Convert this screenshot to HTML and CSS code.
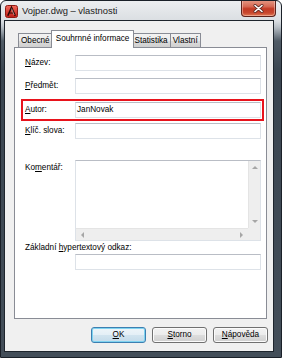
FILE: index.html
```html
<!DOCTYPE html>
<html lang="cs">
<head>
    <meta charset="UTF-8">
    <title>Vojper.dwg – vlastnosti</title>
    <link rel="stylesheet" href="styles.css">
</head>
<body>
    <!-- okno dialogu -->
    <div class="window">
        <div class="titlebar">
            <svg class="app-icon" width="13" height="13" viewBox="0 0 13 13">
                <defs>
                    <linearGradient id="icoRed" x1="0" y1="0" x2="0" y2="1">
                        <stop offset="0" stop-color="#f36a5c"/>
                        <stop offset="1" stop-color="#c01d17"/>
                    </linearGradient>
                </defs>
                <rect x="0.5" y="0.5" width="12" height="12" rx="2" fill="url(#icoRed)" stroke="#8e1b14"/>
                <path d="M2.8 10.8 L6.5 2.4 L10.2 10.8" fill="none" stroke="#2a0604" stroke-width="1.6"/>
                <path d="M4.6 8 L8.4 8" stroke="#2a0604" stroke-width="1.1"/>
                <path d="M6.5 3.6 L9.2 10" fill="none" stroke="#ffd9d2" stroke-width="0.6"/>
            </svg>
            <span class="title">Vojper.dwg – vlastnosti</span>
            <div class="close-btn">
                <svg width="11" height="9" viewBox="0 0 11 9">
                    <path d="M2 1.5 L9 7.5 M9 1.5 L2 7.5" stroke="#5a2a24" stroke-width="3" stroke-linecap="round"/>
                    <path d="M2 1.5 L9 7.5 M9 1.5 L2 7.5" stroke="#ffffff" stroke-width="1.6" stroke-linecap="round"/>
                </svg>
            </div>
        </div>

        <div class="client">
            <!-- záložky -->
            <div class="tabs">
                <div class="tab">Obecné</div>
                <div class="tab active">Souhrnné informace</div>
                <div class="tab">Statistika</div>
                <div class="tab">Vlastní</div>
            </div>

            <div class="panel">
                <div class="row">
                    <span class="label"><u>N</u>ázev:</span>
                    <div class="field"></div>
                </div>
                <div class="row row-2">
                    <span class="label"><u>P</u>ředmět:</span>
                    <div class="field"></div>
                </div>
                <!-- zvýrazněný řádek -->
                <div class="row row-hl">
                    <span class="label"><u>A</u>utor:</span>
                    <div class="field">JanNovak</div>
                </div>
                <div class="row row-4">
                    <span class="label"><u>K</u>líč. slova:</span>
                    <div class="field"></div>
                </div>
                <div class="row row-comment">
                    <span class="label">Ko<u>m</u>entář:</span>
                    <div class="memo">
                        <div class="memo-text"></div>
                        <div class="vscroll"><span class="arr arr-up"></span><span class="arr arr-down"></span></div>
                        <div class="hscroll"><span class="arr arr-left"></span><span class="arr arr-right"></span></div>
                        <div class="corner"></div>
                    </div>
                </div>
                <div class="link-label">Základní <u>h</u>ypertextový odkaz:</div>
                <div class="field link-field"></div>
            </div>

            <div class="buttons">
                <div class="btn btn-default"><u>O</u>K</div>
                <div class="btn"><u>S</u>torno</div>
                <div class="btn"><u>N</u>ápověda</div>
            </div>
        </div>
    </div>
</body>
</html>
```

FILE: styles.css
```css
/* základ */
html, body {
    margin: 0;
    padding: 0;
    background: #ffffff;
}

body {
    font-family: "Liberation Sans", Arial, sans-serif;
    font-size: 8.2px;
    color: #000;
}

u {
    text-decoration: underline;
    text-underline-offset: 1px;
}

/* okno s rámečkem */
.window {
    width: 282px;
    height: 358px;
    box-sizing: border-box;
    border: 1px solid #1a2028;
    border-radius: 6px 6px 0 0;
    background: linear-gradient(180deg, #eceef0 0px, #dadee2 20px, #b9c0c7 26px, #505b66 40px, #3b4651 70px, #434e59 100%);
    display: flex;
    flex-direction: column;
    overflow: hidden;
}

.titlebar {
    height: 20px;
    display: flex;
    align-items: flex-start;
    flex-shrink: 0;
}

.app-icon {
    margin: 4px 0 0 4px;
}

.title {
    margin: 4px 0 0 4px;
    font-size: 9.4px;
    color: #1b1b1b;
    line-height: 12px;
}

.close-btn {
    margin: -1px 5px 0 auto;
    width: 35px;
    height: 17px;
    box-sizing: border-box;
    border: 1px solid #5b231c;
    border-top: none;
    border-radius: 0 0 4px 4px;
    background: linear-gradient(180deg, #e59a86 0%, #d66a55 40%, #c23a24 55%, #c8472e 80%, #e07a55 100%);
    box-shadow: inset 0 0 0 1px rgba(255, 220, 210, 0.45);
    display: flex;
    align-items: center;
    justify-content: center;
}

/* klientská oblast */
.client {
    flex: 1;
    margin: 0 8px 6px 4px;
    background: #f0f0f0;
    box-shadow: 0 0 0 1px #1e252d;
    display: flex;
    flex-direction: column;
}

/* záložky */
.tabs {
    display: flex;
    align-items: flex-end;
    height: 17px;
    margin: 9px 0 0 13px;
    position: relative;
    z-index: 2;
}

.tab {
    height: 14px;
    box-sizing: border-box;
    padding: 0 2px;
    border: 1px solid #898c95;
    border-bottom: none;
    background: linear-gradient(180deg, #f2f2f2 0%, #ebebeb 50%, #dddddd 51%, #cfcfcf 100%);
    line-height: 13px;
    color: #000;
}

.tab + .tab {
    margin-left: -1px;
}

.tab.active {
    height: 18px;
    margin: 0 -2px -1px -2px;
    padding: 0 4px;
    background: #ffffff;
    line-height: 16px;
    position: relative;
    z-index: 1;
}

.panel {
    height: 272px;
    box-sizing: border-box;
    margin: 0 6px 0 9px;
    border: 1px solid #898c95;
    background: #ffffff;
    padding-top: 7px;
    display: flex;
    flex-direction: column;
}

.row {
    display: flex;
    align-items: center;
    padding: 0 5px 0 10px;
}

.row-2 { margin-top: 7px; }
.row-4 { margin-top: 2px; }

.row-hl {
    margin: 5px 2px 0 6px;
    border: 2px solid #e8131c;
    padding: 1px 1px 1px 2px;
}

.row-comment {
    margin-top: 21px;
    align-items: flex-start;
}

.row-comment .label {
    padding-top: 3px;
}

.label {
    width: 50px;
    flex-shrink: 0;
    line-height: 10px;
}

.field {
    flex: 1;
    height: 16px;
    box-sizing: border-box;
    border: 1px solid #dde2e8;
    border-top-color: #b9bdc5;
    background: #fff;
    padding-left: 1px;
    line-height: 14px;
}

/* víceřádkové pole se scrollbary */
.memo {
    flex: 1;
    height: 81px;
    box-sizing: border-box;
    border: 1px solid #dde2e8;
    border-top-color: #b9bdc5;
    display: grid;
    grid-template-columns: 1fr 12px;
    grid-template-rows: 1fr 12px;
}

.vscroll {
    background: #eeeeee;
    border-left: 1px solid #e4e4e4;
    display: flex;
    flex-direction: column;
    justify-content: space-between;
    align-items: center;
    padding: 5px 0 5px;
}

.hscroll {
    background: #eeeeee;
    border-top: 1px solid #e4e4e4;
    display: flex;
    justify-content: space-between;
    align-items: center;
    padding: 0 5px;
}

.corner {
    background: #eeeeee;
}

.arr {
    width: 0;
    height: 0;
    border: 3px solid transparent;
}

.arr-up { border-bottom-color: #a6a6a6; border-top-width: 0; }
.arr-down { border-top-color: #a6a6a6; border-bottom-width: 0; }
.arr-left { border-right-color: #a6a6a6; border-left-width: 0; }
.arr-right { border-left-color: #a6a6a6; border-right-width: 0; }

.link-label {
    margin: 2px 0 0 10px;
    line-height: 10px;
}

.link-field {
    flex: none;
    margin: 1px 5px 0 60px;
}

/* tlačítka */
.buttons {
    display: flex;
    justify-content: flex-end;
    gap: 6px;
    margin-top: 8px;
    padding-right: 5px;
}

.btn {
    width: 55px;
    height: 16px;
    box-sizing: border-box;
    border: 1px solid #707070;
    border-radius: 3px;
    background: linear-gradient(180deg, #f2f2f2 0%, #ebebeb 50%, #dddddd 51%, #cfcfcf 100%);
    box-shadow: inset 0 0 0 1px #fbfbfb;
    text-align: center;
    line-height: 14px;
}

.btn-default {
    border-color: #3c7fb1;
    box-shadow: inset 0 0 0 1px #7fd3f0;
    background: linear-gradient(180deg, #eef5f9 0%, #e4eff6 50%, #d2e4ef 51%, #c3dbea 100%);
}
```
